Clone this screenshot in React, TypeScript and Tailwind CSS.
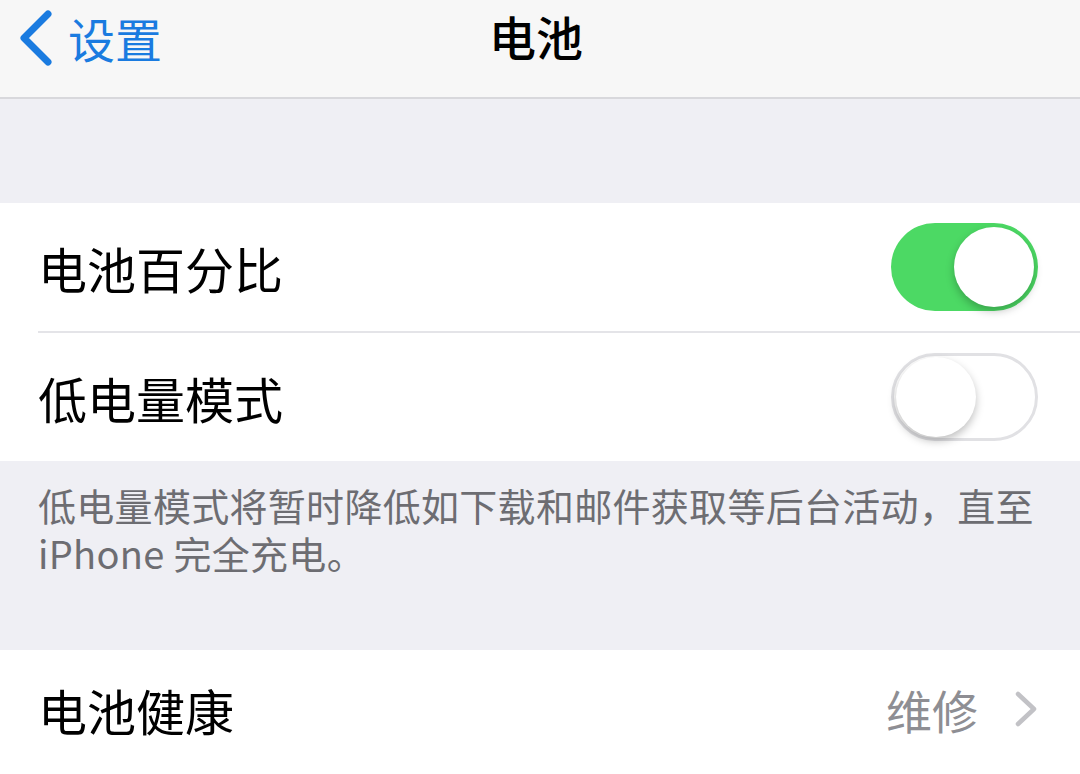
const FONT = { fontFamily: '"Noto Sans CJK SC", "Noto Sans", sans-serif' };

function Toggle({ on }: { on: boolean }) {
  return (
    <div
      className={`relative w-[147px] h-[88px] rounded-full ${
        on ? 'bg-[#4cd964]' : 'bg-white border-[3px] border-[#e1e1e4]'
      }`}
    >
      <div
        className={`absolute top-1/2 -translate-y-1/2 w-[80px] h-[80px] rounded-full bg-white shadow-[0_4px_8px_rgba(0,0,0,0.25)] ${
          on ? 'right-[4px]' : 'left-[2px]'
        }`}
      />
    </div>
  );
}

export default function App() {
  return (
    <div className="w-[1080px] h-[774px] overflow-hidden bg-[#efeff4]" style={FONT}>
      {/* 导航栏 */}
      <header className="relative h-[99px] bg-[#f7f7f7] border-b-2 border-[#d8d8dc] flex items-center">
        <div className="flex items-center pl-[16px] pb-[22px] text-[#1a7be0]">
          <svg width="40" height="60" viewBox="0 0 40 60" fill="none">
            <path d="M32 6 L8 30 L32 54" stroke="currentColor" strokeWidth="7" strokeLinecap="round" strokeLinejoin="round" />
          </svg>
          <span className="ml-[12px] text-[47px] leading-none">设置</span>
        </div>
        <h1 className="absolute left-[489px] top-[9px] text-[47px] leading-[54px] font-medium text-black">电池</h1>
      </header>

      <div className="h-[104px]" />

      {/* 开关组 */}
      <div className="bg-white">
        <div className="h-[128px] flex items-center justify-between pl-[38px] pr-[42px]">
          <span className="text-[49px] leading-none text-black">电池百分比</span>
          <Toggle on />
        </div>
        <div className="ml-[38px] h-[2px] bg-[#e4e4e8]" />
        <div className="h-[128px] flex items-center justify-between pl-[38px] pr-[42px]">
          <span className="text-[49px] leading-none text-black">低电量模式</span>
          <Toggle on={false} />
        </div>
      </div>

      {/* 说明 */}
      <div className="h-[189px] pl-[38px] pr-[40px] pt-[20px] text-[38px] leading-[48px] text-[#6d6d72] tracking-[0.3px]">
        <div>低电量模式将暂时降低如下载和邮件获取等后台活动，直至</div>
        <div>iPhone 完全充电。</div>
      </div>

      {/* 电池健康 */}
      <div className="bg-white h-[128px] flex items-center justify-between pl-[38px] pr-[42px] pb-[10px]">
        <span className="text-[49px] leading-none text-black">电池健康</span>
        <div className="flex items-center gap-[36px]">
          <span className="text-[46px] leading-none text-[#8e8e93]">维修</span>
          <svg width="24" height="38" viewBox="0 0 24 38" fill="none" className="text-[#c2c2c6]">
            <path d="M4 4 L20 19 L4 34" stroke="currentColor" strokeWidth="4.5" strokeLinecap="round" strokeLinejoin="round" />
          </svg>
        </div>
      </div>
    </div>
  );
}
